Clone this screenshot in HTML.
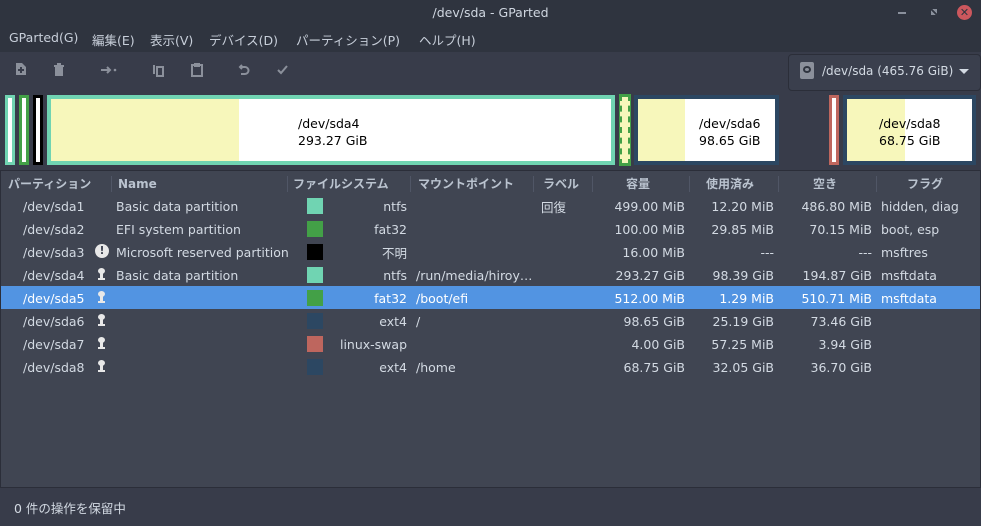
<!DOCTYPE html><html><head><meta charset="utf-8"><style>
*{margin:0;padding:0;box-sizing:border-box}
body{width:981px;height:526px;background:#383c4a;font-family:"DejaVu Sans","Liberation Sans","Noto Sans CJK JP",sans-serif;font-size:12.5px;color:#d3dae3;position:relative;overflow:hidden}
.a{position:absolute;white-space:nowrap}
.r{text-align:right}
#title{left:0;top:0;width:981px;height:28px;background:#2f343f}
#menu{left:0;top:28px;width:981px;height:24px;background:#2f343f}
#list{left:0;top:170px;width:981px;height:318px;background:#404552;border:1px solid #2b2e39}
.h{color:#bac3cf;font-weight:bold;font-size:12px}
.sep{position:absolute;top:176px;width:1px;height:16px;background:#505666}
.sw{position:absolute;width:16px;height:16px}
.part{position:absolute;top:95px;height:70px}
</style></head><body>
<div class="a" id="title"></div>
<div class="a" style="left:0;top:5px;width:981px;text-align:center;color:#cfd6e0">/dev/sda - GParted</div>
<div class="a" style="left:898px;top:12px;width:8px;height:2px;background:#8a909c"></div>
<div class="a" style="left:931px;top:9px;width:6px;height:6px;background:linear-gradient(45deg,#8a909c 40%,transparent 40%,transparent 60%,#8a909c 60%)"></div>
<div class="a" style="left:957px;top:5px;width:15px;height:15px;border-radius:50%;background:#cc575d;color:#2f343f;font-size:11px;line-height:15px;text-align:center;font-weight:bold">✕</div>
<div class="a" id="menu"></div>
<div class="a" style="left:9px;top:30px;color:#c8cfda">GParted(G)</div>
<div class="a" style="left:92px;top:30px;color:#c8cfda">編集(E)</div>
<div class="a" style="left:150px;top:30px;color:#c8cfda">表示(V)</div>
<div class="a" style="left:209px;top:30px;color:#c8cfda">デバイス(D)</div>
<div class="a" style="left:296px;top:30px;color:#c8cfda">パーティション(P)</div>
<div class="a" style="left:419px;top:30px;color:#c8cfda">ヘルプ(H)</div>
<svg class="a" style="left:0;top:52px" width="300" height="40" fill="none" stroke="#8b909b" stroke-width="2">
<path d="M16 11h6l4 4v8H16z" fill="#8b909b" stroke="none"/><path d="M21 15v6M18 18h6" stroke="#383c4a"/>
<path d="M54 14h10M56 14v9h6v-9" fill="#8b909b" stroke="#8b909b"/><path d="M57 12h4"/>
<path d="M101 18h9M107 15l3 3-3 3"/><circle cx="115" cy="18" r="1.3" fill="#8b909b" stroke="none"/>
<path d="M154 13v9M157 15h6v9h-6z"/>
<path d="M192 13h10v11h-10z"/><path d="M195 12h4v2h-4z" fill="#8b909b"/>
<path d="M242 13l-2 2 2 2M240 15h5a3.5 3.5 0 010 7h-4"/>
<path d="M278 18l3 3 6-7"/>
</svg>
<div class="a" style="left:788px;top:54px;width:193px;height:37px;background:#3a3f4d;border:1px solid #2b2e39;border-radius:4px"></div>
<div class="a" style="left:800px;top:62px;width:14px;height:17px;background:#8b909b;border-radius:2px"></div>
<div class="a" style="left:803px;top:66px;width:8px;height:7px;border:2px solid #2f343f;border-radius:50%"></div>
<div class="a" style="left:822px;top:64px;color:#d3dae3;font-size:12px">/dev/sda (465.76 GiB)</div>
<div class="a" style="left:959px;top:69px;border:5px solid transparent;border-top:5px solid #d3dae3"></div>
<div class="part" style="left:5px;width:10px;background:#fff;border:3px solid #70d4b2"></div>
<div class="part" style="left:19px;width:10px;background:#fff;border:3px solid #43a047"></div>
<div class="part" style="left:33px;width:10px;background:#fff;border:3px solid #000"></div>
<div class="part" style="left:47px;width:568px;background:linear-gradient(90deg,#f7f7bb 188px,#fff 188px);border:4px solid #70d4b2"></div>
<div class="a" style="left:298px;top:115px;color:#000;line-height:17px">/dev/sda4<br>293.27 GiB</div>
<div class="part" style="left:620px;width:10px;background:#f7f7bb;border:2px dashed #43a047;outline:1px solid #43a047"></div>
<div class="part" style="left:634px;width:145px;background:linear-gradient(90deg,#f7f7bb 47px,#fff 47px);border:4px solid #2c4762"></div>
<div class="a" style="left:699px;top:115px;color:#000;line-height:17px">/dev/sda6<br>98.65 GiB</div>
<div class="part" style="left:829px;width:10px;background:#fff;border:3px solid #be665e"></div>
<div class="part" style="left:843px;width:133px;background:linear-gradient(90deg,#f7f7bb 58px,#fff 58px);border:4px solid #2c4762"></div>
<div class="a" style="left:879px;top:115px;color:#000;line-height:17px">/dev/sda8<br>68.75 GiB</div>
<div class="a" id="list"></div>
<div class="a h" style="left:8px;top:175px">パーティション</div>
<div class="a h" style="left:118px;top:177px">Name</div>
<div class="a h" style="left:293px;top:175px">ファイルシステム</div>
<div class="a h" style="left:418px;top:175px">マウントポイント</div>
<div class="a h" style="left:543px;top:175px">ラベル</div>
<div class="a h" style="left:626px;top:175px">容量</div>
<div class="a h" style="left:706px;top:175px">使用済み</div>
<div class="a h" style="left:813px;top:175px">空き</div>
<div class="a h" style="left:907px;top:175px">フラグ</div>
<div class="sep" style="left:111px"></div><div class="sep" style="left:287px"></div><div class="sep" style="left:410px"></div><div class="sep" style="left:533px"></div><div class="sep" style="left:592px"></div><div class="sep" style="left:689px"></div><div class="sep" style="left:778px"></div><div class="sep" style="left:876px"></div>
<div class="a" style="left:1px;top:286px;width:979px;height:23px;background:#5294e2"></div>
<div id="rows"></div>
<script>
var R=[["/dev/sda1","","Basic data partition","#70d4b2","ntfs","","回復","499.00 MiB","12.20 MiB","486.80 MiB","hidden, diag"],
["/dev/sda2","","EFI system partition","#43a047","fat32","","","100.00 MiB","29.85 MiB","70.15 MiB","boot, esp"],
["/dev/sda3","!","Microsoft reserved partition","#000","不明","","","16.00 MiB","---","---","msftres"],
["/dev/sda4","k","Basic data partition","#70d4b2","ntfs","/run/media/hiroy…","","293.27 GiB","98.39 GiB","194.87 GiB","msftdata"],
["/dev/sda5","k","","#43a047","fat32","/boot/efi","","512.00 MiB","1.29 MiB","510.71 MiB","msftdata"],
["/dev/sda6","k","","#2c4762","ext4","/","","98.65 GiB","25.19 GiB","73.46 GiB",""],
["/dev/sda7","k","","#be665e","linux-swap","","","4.00 GiB","57.25 MiB","3.94 GiB",""],
["/dev/sda8","k","","#2c4762","ext4","/home","","68.75 GiB","32.05 GiB","36.70 GiB",""]];
var h="";R.forEach(function(r,i){var y=199+i*23,c=i==4?"#fff":"#d3dae3",by=y-1;
h+='<div class="a" style="left:23px;top:'+y+'px;color:'+c+'">'+r[0]+'</div>';
if(r[1]=="!")h+='<div class="a" style="left:95px;top:'+(by)+'px;width:14px;height:14px;border-radius:50%;background:#e8e8e8;color:#404552;font-size:11px;font-weight:bold;text-align:center;line-height:14px">!</div>';
if(r[1]=="k")h+='<div class="a" style="left:98px;top:'+(by+1)+'px;width:7px;height:6px;border-radius:50%;background:#e8e8e8"></div><div class="a" style="left:100px;top:'+(by+5)+'px;width:3px;height:7px;background:#e8e8e8"></div><div class="a" style="left:98px;top:'+(by+11)+'px;width:7px;height:2px;background:#e8e8e8"></div>';
h+='<div class="a" style="left:116px;top:'+y+'px;color:'+c+'">'+r[2]+'</div>';
h+='<div class="sw" style="left:307px;top:'+(by)+'px;background:'+r[3]+'"></div>';
h+='<div class="a r" style="left:330px;width:77px;top:'+(r[4]=="不明"?y-2:y)+'px;color:'+c+'">'+r[4]+'</div>';
h+='<div class="a" style="left:416px;top:'+y+'px;color:'+c+'">'+r[5]+'</div>';
h+='<div class="a" style="left:541px;top:'+(y-2)+'px;color:'+c+'">'+r[6]+'</div>';
h+='<div class="a r" style="left:585px;width:100px;top:'+y+'px;color:'+c+'">'+r[7]+'</div>';
h+='<div class="a r" style="left:674px;width:100px;top:'+y+'px;color:'+c+'">'+r[8]+'</div>';
h+='<div class="a r" style="left:772px;width:100px;top:'+y+'px;color:'+c+'">'+r[9]+'</div>';
h+='<div class="a" style="left:881px;top:'+y+'px;color:'+c+'">'+r[10]+'</div>';});
document.getElementById("rows").innerHTML=h;
</script>
<div class="a" style="left:14px;top:498px;color:#d3dae3">0 件の操作を保留中</div>
</body></html>
